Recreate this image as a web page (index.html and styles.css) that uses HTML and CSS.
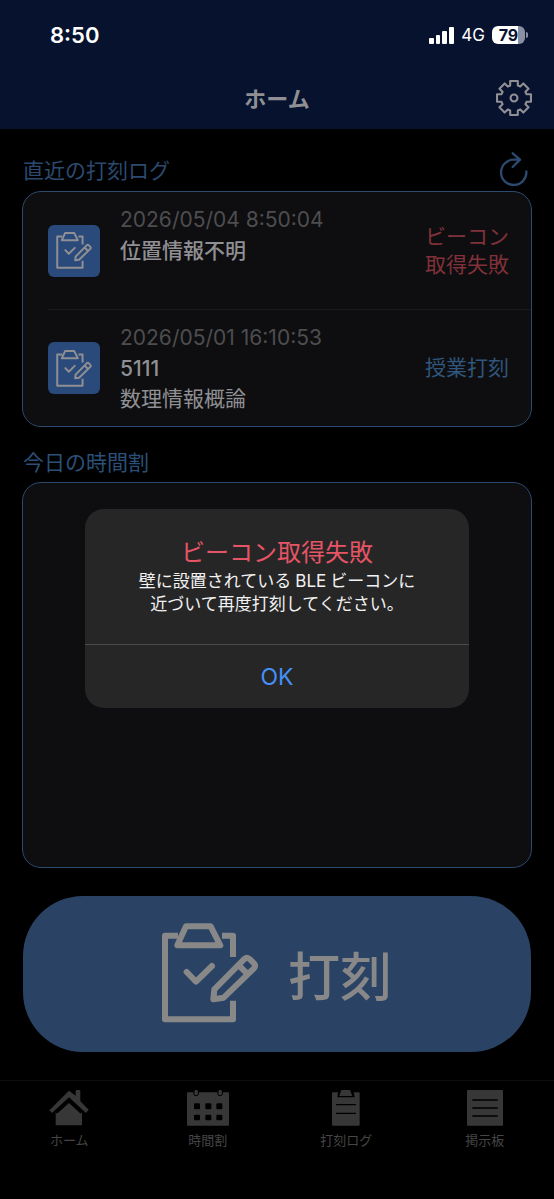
FILE: index.html
```html
<!DOCTYPE html>
<html lang="ja">
<head>
<meta charset="utf-8">
<meta name="viewport" content="width=device-width, initial-scale=1">
<title>ホーム</title>
<link rel="stylesheet" href="styles.css">
</head>
<body>
<svg class="defs" aria-hidden="true">
  <symbol id="clipboard-pen" viewBox="0 0 288 298">
    <g fill="none" stroke="currentColor" stroke-linejoin="round">
      <path d="M48 37H9V288H213V232M180 37H213V101"/>
      <path d="M72 9H146L175 66H46Z"/>
      <path stroke-linecap="round" d="M74 146L102 175L150 128"/>
      <path d="M154 228L157 198L246 108Q254 98 264 108L274 118Q284 127 275 136L185 223Z"/>
      <path d="M229 125L258 153"/>
    </g>
  </symbol>
</svg>
<div class="app">
  <header class="top">
    <div class="status">
      <span class="clock">8:50</span>
      <div class="signals">
        <svg class="bars" viewBox="0 0 25 17" aria-hidden="true"><g fill="currentColor"><rect x="0" y="11" width="5" height="6" rx="1"/><rect x="7" y="8" width="4" height="9" rx="1"/><rect x="13" y="4" width="5" height="13" rx="1"/><rect x="20" y="0" width="5" height="17" rx="1"/></g></svg>
        <span class="network">4G</span>
        <span class="battery"><span class="level">79</span></span>
      </div>
    </div>
    <div class="navbar">
      <h1>ホーム</h1>
      <button class="icon-button" type="button" aria-label="設定">
        <svg class="gear" viewBox="-52 -52 104 104" fill="none" stroke="currentColor" stroke-width="6" stroke-linejoin="round" aria-hidden="true"><path d="M-11-36V-49H11V-36L18-33L27-42L42-27L33-18L36-11H49V11H36L33 18L42 27L27 42L18 33L11 36V49H-11V36L-18 33L-27 42L-42 27L-33 18L-36 11H-49V-11H-36L-33-18L-42-27L-27-42L-18-33Z"/><circle r="10"/></svg>
      </button>
    </div>
  </header>

  <main class="content">
    <section>
      <div class="section-head">
        <h2>直近の打刻ログ</h2>
        <button class="icon-button reload" type="button" aria-label="更新">
          <svg class="reload-icon" viewBox="0 0 84 102" fill="none" stroke="currentColor" stroke-width="7" stroke-linecap="round" stroke-linejoin="round" aria-hidden="true"><path d="M79 58A38 38 0 1 1 41 23H60M38 4L60 23L38 45"/></svg>
        </button>
      </div>
      <ul class="panel log">
        <li class="entry">
          <span class="tile"><svg class="tile-icon"><use href="#clipboard-pen"/></svg></span>
          <div class="detail"><time>2026/05/04 8:50:04</time><strong>位置情報不明</strong></div>
          <span class="result failed">ビーコン<br>取得失敗</span>
        </li>
        <li class="entry">
          <span class="tile"><svg class="tile-icon"><use href="#clipboard-pen"/></svg></span>
          <div class="detail"><time>2026/05/01 16:10:53</time><strong>5111</strong><span>数理情報概論</span></div>
          <span class="result">授業打刻</span>
        </li>
      </ul>
    </section>
    <section class="timetable">
      <div class="section-head second"><h2>今日の時間割</h2></div>
      <div class="panel schedule"></div>
    </section>
    <button class="punch" type="button">
      <svg class="punch-icon" aria-hidden="true"><use href="#clipboard-pen"/></svg>
      <span>打刻</span>
    </button>
  </main>

  <nav class="tabs">
    <a href="#home"><svg viewBox="0 0 120 108" aria-hidden="true"><path fill="currentColor" d="M20 67L60 33L99 68V106H20Z"/><path fill="#000" d="M60 22L104 61L95 71L60 39L24 71L15 61Z"/><path fill="currentColor" d="M80 17V3Q80 0 83 0H91Q94 0 94 3V34L119 59L111 69L60 22L9 69L1 61L60 2Z"/></svg>ホーム</a>
    <a href="#timetable"><svg class="wide" viewBox="0 0 126 108" aria-hidden="true"><path fill="currentColor" fill-rule="evenodd" d="M3 7H20Q20 18 27 18T35 7H92Q92 18 99 18T107 7H123Q126 7 126 10V104Q126 107 123 107H3Q0 107 0 104V10Q0 7 3 7ZM24 40Q21 40 21 43V55Q21 58 24 58H36Q39 58 39 55V43Q39 40 36 40ZM58 40Q55 40 55 43V55Q55 58 58 58H70Q73 58 73 55V43Q73 40 70 40ZM91 40Q88 40 88 43V55Q88 58 91 58H103Q106 58 106 55V43Q106 40 103 40ZM24 74Q21 74 21 77V88Q21 91 24 91H36Q39 91 39 88V77Q39 74 36 74ZM58 74Q55 74 55 77V88Q55 91 58 91H70Q73 91 73 88V77Q73 74 70 74ZM91 74Q88 74 88 77V88Q88 91 91 91H103Q106 91 106 88V77Q106 74 103 74Z"/><g fill="currentColor" stroke="#000" stroke-width="3"><rect x="21" y="-2" width="13" height="19" rx="6"/><rect x="93" y="-2" width="13" height="19" rx="6"/></g></svg>時間割</a>
    <a href="#log"><svg viewBox="0 0 120 108" aria-hidden="true"><path fill="currentColor" fill-rule="evenodd" d="M21 7H36L34 20Q34 22 36 22H84Q86 22 86 20L83 7H98Q101 7 101 10V104Q101 107 98 107H21Q18 107 18 104V10Q18 7 21 7ZM30 42V46H90V42ZM30 68V72H90V68Z"/><path fill="currentColor" d="M46 0H72L79 18H40Z"/></svg>打刻ログ</a>
    <a href="#board"><svg viewBox="0 0 120 108" aria-hidden="true"><path fill="currentColor" fill-rule="evenodd" d="M9 0H111Q114 0 114 3V104Q114 107 111 107H9Q6 107 6 104V3Q6 0 9 0ZM22 28V32H98V28ZM22 52V56H98V52ZM22 76V80H98V76Z"/></svg>掲示板</a>
  </nav>

  <div class="modal-layer">
    <div class="alert" role="alertdialog" aria-labelledby="alert-title" aria-describedby="alert-text">
      <div class="alert-body">
        <h2 id="alert-title">ビーコン取得失敗</h2>
        <p id="alert-text">壁に設置されている<span class="latin">BLE</span>ビーコンに<br>近づいて再度打刻してください。</p>
      </div>
      <button class="ok" type="button">OK</button>
    </div>
  </div>
</div>
</body>
</html>
```
FILE: styles.css
```css
* {
  box-sizing: border-box;
}

body {
  margin: 0;
  background: #000;
  color: #909094;
  font-family: Inter, "Noto Sans CJK JP", sans-serif;
}

h1,
h2,
p,
ul {
  margin: 0;
  padding: 0;
}

button {
  border: 0;
  padding: 0;
  background: none;
  color: inherit;
  font: inherit;
}

.defs {
  display: none;
}

.app {
  position: relative;
  display: flex;
  flex-direction: column;
  min-height: 100vh;
}

.top {
  background: #07122f;
}

.status {
  display: flex;
  align-items: center;
  justify-content: space-between;
  height: 70px;
  padding: 0 29px 0 50px;
  color: #fff;
}

.clock {
  font-size: 22px;
  font-weight: 600;
}

.signals {
  display: flex;
  align-items: center;
  gap: 7px;
}

.bars {
  width: 25px;
  height: 17px;
}

.network {
  font-size: 17px;
}

.battery {
  position: relative;
  width: 33px;
  height: 18px;
  border-radius: 6px;
  background: linear-gradient(90deg, #fff 79%, #8890a2 79%);
  text-align: center;
}

.battery::after {
  content: "";
  position: absolute;
  left: 34px;
  top: 6px;
  width: 2px;
  height: 6px;
  border-radius: 0 2px 2px 0;
  background: #8890a2;
}

.level {
  display: block;
  color: #07122f;
  font-size: 16px;
  font-weight: 700;
  line-height: 18px;
}

.navbar {
  display: grid;
  grid-template-columns: 1fr auto 1fr;
  align-items: center;
  height: 59px;
  padding: 0 22px 3px;
}

.navbar h1 {
  grid-column: 2;
  padding-bottom: 3px;
  font-size: 22px;
  font-weight: 700;
}

.icon-button {
  display: flex;
  justify-self: end;
}

.gear {
  width: 36px;
  height: 36px;
}

.content {
  display: flex;
  flex: 1;
  flex-direction: column;
  padding: 22px 22px 28px;
}

.section-head {
  display: flex;
  align-items: center;
  justify-content: space-between;
  height: 40px;
  padding-bottom: 4px;
  color: #2c4a70;
}

.section-head h2 {
  padding-left: 1px;
  font-size: 21px;
  font-weight: 400;
}

.reload {
  padding-right: 4px;
}

.reload-icon {
  width: 28px;
  height: 34px;
}

.second {
  height: 37px;
  margin-top: 18px;
  padding-bottom: 5px;
  color: #2b5078;
}

.panel {
  border: 1px solid #2b4a6e;
  border-radius: 19px;
  background: #0e0e10;
}

.log {
  list-style: none;
}

.entry {
  display: grid;
  grid-template-columns: 52px 1fr auto;
  column-gap: 20px;
  align-items: center;
  height: 117px;
  margin-left: 25px;
  padding-right: 22px;
}

.entry + .entry {
  border-top: 1px solid #19191b;
}

.tile {
  display: grid;
  place-items: center;
  width: 52px;
  height: 52px;
  border-radius: 6px;
  background: #294a7a;
}

.tile-icon {
  width: 36px;
  height: 37px;
  stroke-width: 16;
}

.detail {
  display: flex;
  flex-direction: column;
  align-self: start;
  padding-top: 12px;
  font-size: 21px;
  line-height: 30px;
}

.detail time {
  color: #4d4d4f;
  font-size: 21px;
  line-height: 32px;
}

.detail strong {
  font-weight: 500;
}

.result {
  color: #2f567c;
  font-size: 21px;
  line-height: 28px;
}

.failed {
  color: #80313a;
}

.timetable {
  display: flex;
  flex: 1;
  flex-direction: column;
}

.schedule {
  flex: 1;
}

.punch {
  display: flex;
  align-items: center;
  justify-content: center;
  gap: 30px;
  height: 156px;
  margin: 28px 1px 0;
  padding-bottom: 2px;
  border-radius: 60px;
  background: #2a4364;
  color: #888;
  font-size: 52px;
  font-weight: 500;
}

.punch-icon {
  width: 96px;
  height: 100px;
  stroke-width: 18;
}

.tabs {
  display: grid;
  grid-template-columns: repeat(4, 1fr);
  height: 119px;
  padding-top: 9px;
  border-top: 1px solid #0d0d0d;
}

.tabs a {
  display: flex;
  flex-direction: column;
  align-items: center;
  gap: 4px;
  color: #464646;
  font-size: 13px;
  line-height: 20px;
  text-decoration: none;
}

.tabs svg {
  width: 40px;
  height: 36px;
  color: #373737;
}

.tabs .wide {
  width: 42px;
}

.modal-layer {
  position: absolute;
  inset: 0;
  display: flex;
  align-items: center;
  justify-content: center;
  padding: 18px 16px 0;
}

.alert {
  overflow: hidden;
  width: 384px;
  border-radius: 19px;
  background: #262627;
  text-align: center;
}

.alert-body {
  padding: 26px 16px 28px;
  border-bottom: 1px solid #49494b;
}

.alert h2 {
  color: #e65565;
  font-size: 24px;
  font-weight: 400;
  line-height: 35px;
}

.alert p {
  color: #f2f2f2;
  font-size: 17px;
  line-height: 23px;
}

.latin {
  margin: 0 4px;
}

.ok {
  display: block;
  width: 100%;
  height: 63px;
  color: #4490f6;
  font-size: 23px;
}
```
